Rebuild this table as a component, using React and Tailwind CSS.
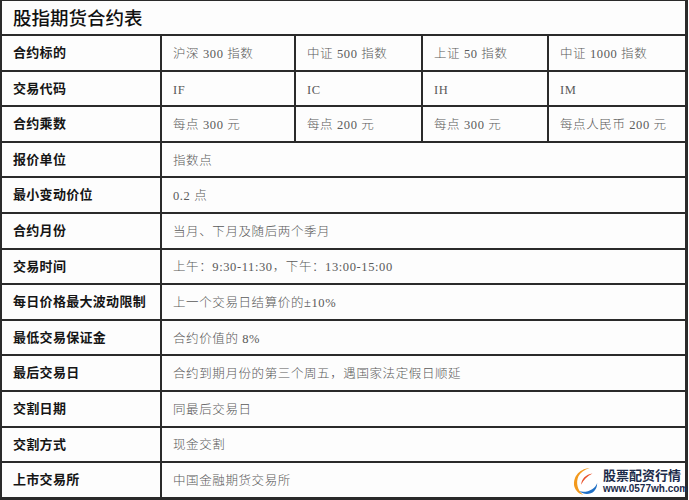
import React from "react";

const labelFont = { fontFamily: '"Noto Sans CJK SC", "Noto Sans", sans-serif' };
const valueFont = { fontFamily: '"Liberation Serif", "Noto Sans CJK SC", serif' };

const rows4 = [
  ["合约标的", ["沪深 300 指数", "中证 500 指数", "上证 50 指数", "中证 1000 指数"]],
  ["交易代码", ["IF", "IC", "IH", "IM"]],
  ["合约乘数", ["每点 300 元", "每点 200 元", "每点 300 元", "每点人民币 200 元"]],
];

const rows1 = [
  ["报价单位", "指数点"],
  ["最小变动价位", "0.2 点"],
  ["合约月份", "当月、下月及随后两个季月"],
  ["交易时间", "上午：9:30-11:30，下午：13:00-15:00"],
  ["每日价格最大波动限制", "上一个交易日结算价的±10%"],
  ["最低交易保证金", "合约价值的 8%"],
  ["最后交易日", "合约到期月份的第三个周五，遇国家法定假日顺延"],
  ["交割日期", "同最后交易日"],
  ["交割方式", "现金交割"],
  ["上市交易所", "中国金融期货交易所"],
];

function Label({ children }) {
  return (
    <div
      className="w-[158px] shrink-0 flex items-center pl-[11px] pb-[2px] text-[13px] font-bold text-[#151515] tracking-[0.3px]"
      style={labelFont}
    >
      {children}
    </div>
  );
}

function Val({ children, className }) {
  return (
    <div
      className={
        "flex items-center pl-[11px] pt-[3px] border-l-2 border-[#2a2a2a] text-[12.5px] font-light text-[#5a5a5a] tracking-[0.6px] " +
        className
      }
      style={valueFont}
    >
      {children}
    </div>
  );
}

export default function App() {
  const widths = ["w-[134px]", "w-[127px]", "w-[126px]", "flex-1"];
  return (
    <div className="relative w-[689px] h-[500px] bg-white overflow-hidden">
      <div className="w-[688px] h-[500px] border-l-2 border-r-[3px] border-t border-b-[3px] border-[#2a2a2a] flex flex-col bg-[#fdfdfd]">
        <div className="h-[33px] flex items-center pl-[11px]">
          <span className="text-[18.5px] font-medium text-[#111]" style={labelFont}>
            股指期货合约表
          </span>
        </div>
        {rows4.map(([label, vals]) => (
          <div key={label} className="h-[35.6px] flex border-t-2 border-[#2a2a2a]">
            <Label>{label}</Label>
            {vals.map((v, i) => (
              <Val key={i} className={widths[i]}>
                {v}
              </Val>
            ))}
          </div>
        ))}
        {rows1.map(([label, v]) => (
          <div key={label} className="h-[35.6px] flex border-t-2 border-[#2a2a2a]">
            <Label>{label}</Label>
            <Val className="flex-1">{v}</Val>
          </div>
        ))}
      </div>

      <div className="absolute left-[570px] top-[464px] w-[115px] h-[33px] bg-white flex items-center">
        <svg width="30" height="30" viewBox="0 0 32 32" className="shrink-0">
          <path d="M21 2 C9 3 2 13 5 23 C7 28 11 30 14 31 C8 26 6 18 9 11 C11 7 15 4 21 2 Z" fill="#f39a1e" />
          <path d="M24 8 C17 9 12 14 12 20 C14 15 18 11 24 8 Z" fill="#e8502a" />
          <path d="M10 27 C18 33 29 29 29 18 C27 24 19 29 10 27 Z" fill="#1f6fc4" />
        </svg>
        <div className="flex flex-col leading-none ml-[3px]">
          <span className="text-[13px] font-bold text-[#1c2b4a]" style={labelFont}>
            股票配资行情
          </span>
          <span
            className="text-[10px] font-bold text-[#1c2b4a] mt-[3px]"
            style={{ fontFamily: '"Liberation Sans", Arial, sans-serif' }}
          >
            www.0577wh.com
          </span>
        </div>
      </div>
    </div>
  );
}
